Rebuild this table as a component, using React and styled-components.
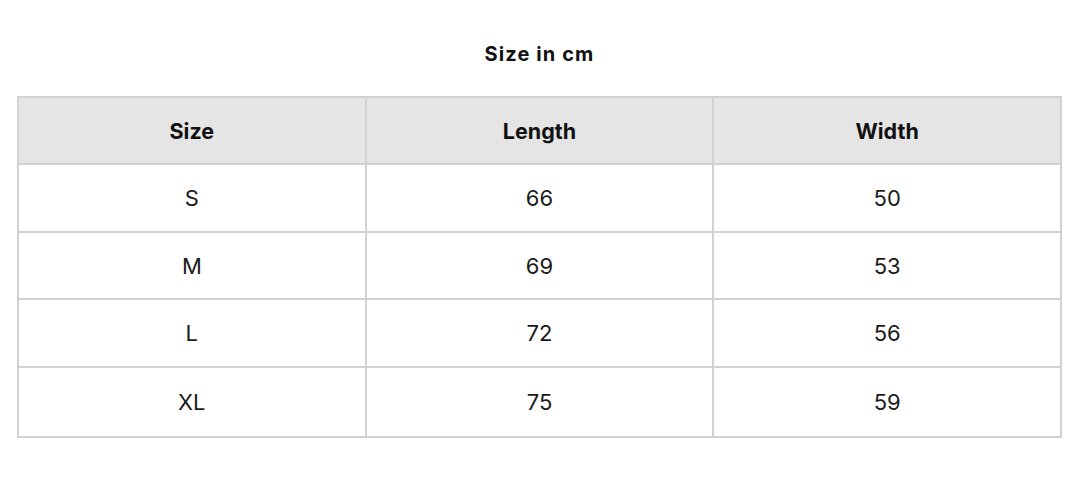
import React from "react";
import styled, { createGlobalStyle } from "styled-components";

const Global = createGlobalStyle`
  html, body { margin: 0; padding: 0; background: #ffffff; }
  body { font-family: Inter, "Open Sans", sans-serif; color: #111111; }
`;

const Page = styled.div`
  width: 1079px;
  height: 488px;
  padding: 40px 17px 0 17px;
  box-sizing: border-box;
`;

const Title = styled.h2`
  margin: 0 0 28px 0;
  text-align: center;
  font-size: 20px;
  font-weight: 700;
  letter-spacing: 1.1px;
  line-height: 28px;
  color: #111;
`;

const Table = styled.table`
  width: 1045px;
  border-collapse: collapse;
  table-layout: fixed;
  border: 2px solid #d1d1d1;
`;

const Th = styled.th`
  background: #e5e5e5;
  border: 2px solid #d1d1d1;
  height: 65px;
  padding: 0;
  font-size: 21.5px;
  font-weight: 700;
  text-align: center;
  color: #111;
`;

const Td = styled.td`
  border: 2px solid #d1d1d1;
  height: ${(p) => p.$h}px;
  padding: 0;
  font-size: 22px;
  font-weight: 400;
  text-align: center;
  color: #1a1a1a;
`;

const rows = [
  { h: 66, c: ["S", "66", "50"] },
  { h: 65, c: ["M", "69", "53"] },
  { h: 66, c: ["L", "72", "56"] },
  { h: 68, c: ["XL", "75", "59"] },
];

export default function App() {
  return (
    <>
      <Global />
      <Page>
        <Title>Size in cm</Title>
        <Table>
          <thead>
            <tr>
              <Th>Size</Th>
              <Th>Length</Th>
              <Th>Width</Th>
            </tr>
          </thead>
          <tbody>
            {rows.map((r) => (
              <tr key={r.c[0]}>
                {r.c.map((c, j) => (
                  <Td key={j} $h={r.h}>{c}</Td>
                ))}
              </tr>
            ))}
          </tbody>
        </Table>
      </Page>
    </>
  );
}
